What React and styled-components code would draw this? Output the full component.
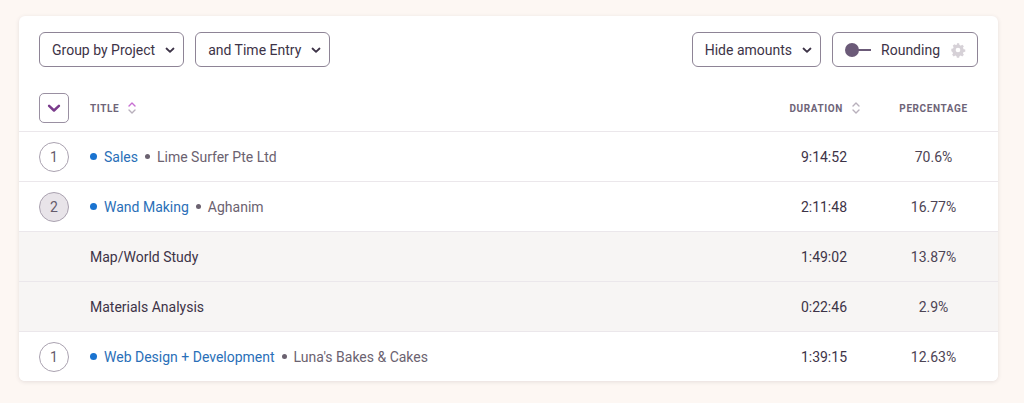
import React from "react";
import styled, { createGlobalStyle } from "styled-components";

const GlobalStyle = createGlobalStyle`
    body {
        margin: 0;
        background: #fdf7f3;
        font-family: Roboto, "Liberation Sans", sans-serif;
        color: #3d3347;
    }
`;

const Page = styled.div`
    padding: 16px 26px 23px 19px;
`;

const Card = styled.div`
    background: #fff;
    border-radius: 6px;
    box-shadow: 0 1px 4px rgba(60, 40, 60, 0.12);
    overflow: hidden;
`;

const Toolbar = styled.div`
    display: flex;
    align-items: center;
    gap: 11px;
    padding: 16px 20px 0 20px;
`;

const Spacer = styled.div`
    flex: 1;
`;

const Button = styled.button`
    display: flex;
    align-items: center;
    gap: 10px;
    height: 35px;
    padding: 0 ${(p) => p.$pr || 8}px 0 12px;
    border: 1px solid #8e8496;
    border-radius: 6px;
    background: #fff;
    font-family: inherit;
    font-size: 14px;
    color: #3d3347;
    cursor: pointer;
`;

const Toggle = styled.span`
    position: relative;
    display: inline-block;
    width: 26px;
    height: 14px;
    &::before {
        content: "";
        position: absolute;
        left: 0;
        top: 0;
        width: 14px;
        height: 14px;
        border-radius: 50%;
        background: #6b5a78;
    }
    &::after {
        content: "";
        position: absolute;
        left: 12px;
        top: 6.5px;
        width: 14px;
        height: 1.5px;
        background: #6b5a78;
    }
`;

const HeaderRow = styled.div`
    display: grid;
    grid-template-columns: 51px 1fr 130px 127px;
    align-items: center;
    height: 46px;
    margin-top: 18px;
    padding-left: 20px;
    border-bottom: 1px solid #ebe7eb;
`;

const ExpandBox = styled.div`
    width: 30px;
    height: 30px;
    box-sizing: border-box;
    border: 1px solid #9a90a2;
    border-radius: 5px;
    display: flex;
    align-items: center;
    justify-content: center;
`;

const HeadLabel = styled.div`
    display: flex;
    align-items: center;
    gap: 8px;
    font-size: 10px;
    font-weight: 700;
    letter-spacing: 0.6px;
    text-transform: uppercase;
    color: #6e6478;
    justify-content: ${(p) => p.$align || "flex-start"};
    padding-right: ${(p) => p.$pr || 0}px;
`;

const Row = styled.div`
    display: grid;
    grid-template-columns: 51px 1fr 130px 127px;
    align-items: center;
    height: 49px;
    padding-left: 20px;
    background: ${(p) => (p.$sub ? "#f7f5f4" : "#fff")};
    border-bottom: ${(p) => (p.$last ? "none" : "1px solid #ebe7eb")};
    font-size: 14px;
`;

const Badge = styled.div`
    width: 30px;
    height: 30px;
    box-sizing: border-box;
    border-radius: 50%;
    border: 1px solid #aaa2b0;
    background: ${(p) => (p.$filled ? "#e8e4e9" : "#fff")};
    display: flex;
    align-items: center;
    justify-content: center;
    font-size: 14px;
    color: #655b6c;
`;

const TitleCell = styled.div`
    display: flex;
    align-items: center;
    gap: 7px;
`;

const Dot = styled.span`
    width: 7px;
    height: 7px;
    border-radius: 50%;
    background: ${(p) => p.$color || "#1a73d0"};
    flex: none;
`;

const ProjectName = styled.span`
    color: #2a6fb8;
`;

const Client = styled.span`
    color: #6b6270;
`;

const SmallDot = styled.span`
    width: 5px;
    height: 5px;
    border-radius: 50%;
    background: #6b6270;
    flex: none;
`;

const Duration = styled.div`
    text-align: right;
    padding-right: 24px;
`;

const Percent = styled.div`
    text-align: center;
    color: #4d4454;
    padding-right: 2px;
`;

const Chevron = ({ color = "#3d3347", size = 10 }) => (
    <svg width={size} height={size} viewBox="0 0 10 10">
        <path d="M1.5 3.5 L5 6.8 L8.5 3.5" fill="none" stroke={color} strokeWidth="1.8" strokeLinecap="round" strokeLinejoin="round" />
    </svg>
);

const SortIcon = ({ top = "#b8b0bc", bottom = "#b8b0bc" }) => (
    <svg width="10" height="14" viewBox="0 0 10 14">
        <path d="M2 5 L5 2 L8 5" fill="none" stroke={top} strokeWidth="1.4" strokeLinecap="round" strokeLinejoin="round" />
        <path d="M2 9 L5 12 L8 9" fill="none" stroke={bottom} strokeWidth="1.4" strokeLinecap="round" strokeLinejoin="round" />
    </svg>
);

const Gear = () => (
    <svg width="16" height="16" viewBox="0 0 24 24">
        <path
            fill="#d6d1d7"
            fillRule="evenodd"
            d="M10.3 2h3.4l.5 2.6c.7.2 1.3.5 1.9.9l2.3-1.4 2.4 2.4-1.4 2.3c.4.6.7 1.2.9 1.9l2.6.5v3.4l-2.6.5c-.2.7-.5 1.3-.9 1.9l1.4 2.3-2.4 2.4-2.3-1.4c-.6.4-1.2.7-1.900.9l-.5 2.6h-3.4l-.5-2.6c-.7-.2-1.3-.5-1.9-.9l-2.3 1.4-2.4-2.4 1.4-2.3c-.4-.6-.7-1.2-.9-1.9L2 13.7v-3.4l2.6-.5c.2-.7.5-1.3.9-1.9L4.1 5.6l2.4-2.4 2.3 1.4c.6-.4 1.2-.7 1.9-.9L10.3 2zM12 8.5a3.5 3.5 0 1 0 0 7 3.5 3.5 0 0 0 0-7z"
        />
    </svg>
);

const rows = [
    { badge: 1, name: "Sales", client: "Lime Surfer Pte Ltd", duration: "9:14:52", pct: "70.6%" },
    { badge: 2, filled: true, name: "Wand Making", client: "Aghanim", duration: "2:11:48", pct: "16.77%" },
    { sub: true, name: "Map/World Study", duration: "1:49:02", pct: "13.87%" },
    { sub: true, name: "Materials Analysis", duration: "0:22:46", pct: "2.9%" },
    { badge: 1, name: "Web Design + Development", client: "Luna's Bakes & Cakes", duration: "1:39:15", pct: "12.63%" },
];

const App = () => {
    return (
        <Page>
            <GlobalStyle />
            <Card>
                <Toolbar>
                    <Button>
                        Group by Project <Chevron />
                    </Button>
                    <Button>
                        and Time Entry <Chevron />
                    </Button>
                    <Spacer />
                    <Button>
                        Hide amounts <Chevron />
                    </Button>
                    <Button $pr={11}>
                        <Toggle />
                        Rounding
                        <Gear />
                    </Button>
                </Toolbar>
                <HeaderRow>
                    <ExpandBox>
                        <Chevron color="#7a3c8c" size={14} />
                    </ExpandBox>
                    <HeadLabel>
                        Title <SortIcon top="#c76fd2" bottom="#b8b0bc" />
                    </HeadLabel>
                    <HeadLabel $align="flex-end" $pr={10}>
                        Duration <SortIcon />
                    </HeadLabel>
                    <HeadLabel $align="center" $pr={2}>
                        Percentage
                    </HeadLabel>
                </HeaderRow>
                {rows.map((r, i) => (
                    <Row key={i} $sub={r.sub} $last={i === rows.length - 1}>
                        <div>{r.badge && <Badge $filled={r.filled}>{r.badge}</Badge>}</div>
                        {r.sub ? (
                            <TitleCell>{r.name}</TitleCell>
                        ) : (
                            <TitleCell>
                                <Dot />
                                <ProjectName>{r.name}</ProjectName>
                                <SmallDot />
                                <Client>{r.client}</Client>
                            </TitleCell>
                        )}
                        <Duration>{r.duration}</Duration>
                        <Percent>{r.pct}</Percent>
                    </Row>
                ))}
            </Card>
        </Page>
    );
};

export default App;
